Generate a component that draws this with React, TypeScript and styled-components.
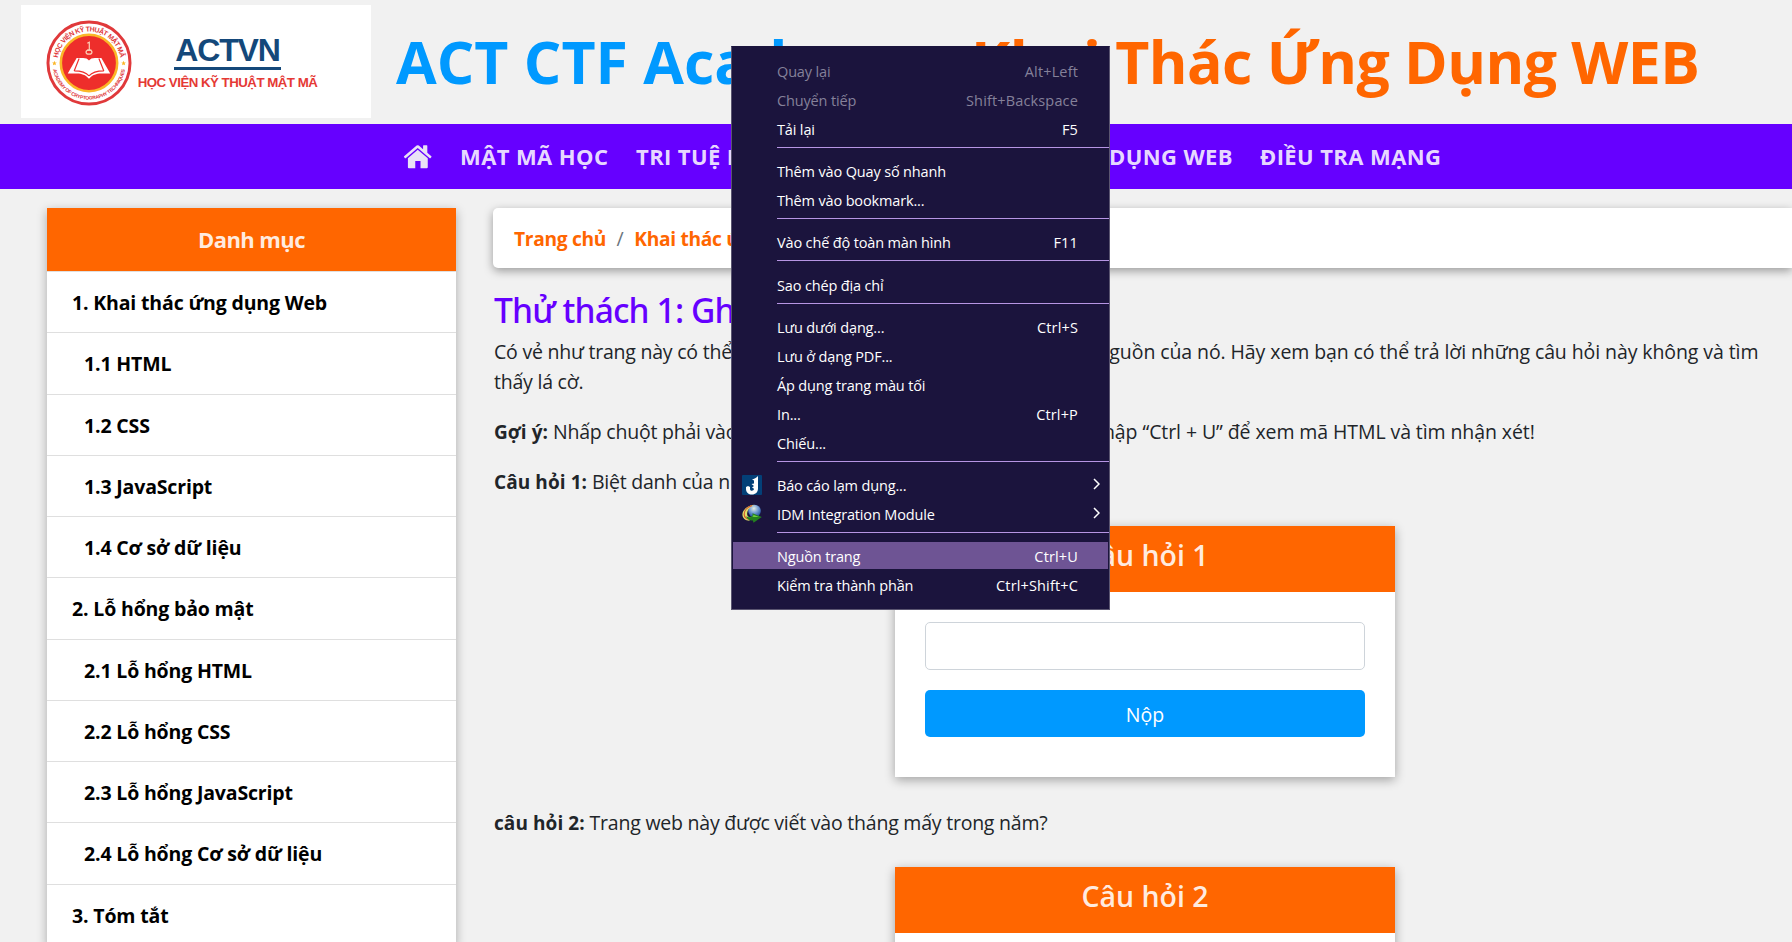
import React from "react";
import styled, { createGlobalStyle } from "styled-components";

const GlobalStyle = createGlobalStyle`
  * { box-sizing: border-box; }
  body {
    margin: 0;
    background: #f1f1f1;
    color: #212529;
    font-family: "Open Sans", "Noto Sans", sans-serif;
    font-size: 19.5px;
    line-height: 30.2px;
    overflow: hidden;
  }
  p, h1, h2, h3, ul { margin: 0; padding: 0; }
`;

const Page = styled.div`
  position: relative;
  width: 1792px;
  height: 942px;
  overflow: hidden;
`;

const Header = styled.header`
  display: flex;
  height: 124px;
  padding: 5px 0 0 21px;
`;

const Logo = styled.div`
  display: flex;
  width: 350px;
  height: 113px;
  padding: 15px 0 0 25px;
  background: #fff;
`;

const LogoText = styled.div`
  display: flex;
  flex-direction: column;
  align-items: center;
  width: 181px;
  margin: 13px 0 0 5px;
  font-family: "Liberation Sans", sans-serif;
  font-weight: 700;
  white-space: nowrap;
`;

const LogoName = styled.div`
  height: 37px;
  padding: 0 1px;
  border-bottom: 3px solid #14487a;
  color: #14487a;
  font-size: 32px;
  line-height: 35px;
  letter-spacing: -1.1px;
`;

const LogoCaption = styled.div`
  margin-top: 5px;
  color: #e53935;
  font-size: 13.3px;
  line-height: 16px;
  letter-spacing: -0.52px;
`;

const Title = styled.h1`
  display: flex;
  margin-left: 25px;
  font-size: 59px;
  line-height: 78px;
  padding-top: 17px;
  font-weight: 700;
  white-space: nowrap;
`;

const TitleBrand = styled.span`
  width: 575px;
  color: #0099ff;
`;

const TitleTopic = styled.span`
  color: #ff6600;
  letter-spacing: -0.55px;
`;

const Nav = styled.nav`
  display: flex;
  align-items: center;
  height: 65px;
  padding-left: 403px;
  background: #6600ff;
  color: rgba(255, 255, 255, 0.87);
  font-size: 22px;
  font-weight: 700;
  letter-spacing: 0.4px;
  white-space: nowrap;
`;

const NavItem = styled.a<{ $width: number; $alignEnd?: boolean }>`
  width: ${(p) => p.$width}px;
  margin-right: 27px;
  text-align: ${(p) => (p.$alignEnd ? "right" : "left")};
`;

const HomeLink = styled.a`
  display: flex;
  width: 57px;
`;

const Main = styled.main`
  display: flex;
  align-items: flex-start;
  padding: 19px 0 0 47px;
`;

const Sidebar = styled.aside`
  width: 409px;
  flex: none;
  background: #fff;
  box-shadow: 0 3px 10px rgba(0, 0, 0, 0.3);
`;

const SidebarHeader = styled.div`
  height: 63px;
  background: #ff6600;
  color: rgba(255, 255, 255, 0.88);
  font-size: 22px;
  font-weight: 700;
  line-height: 62px;
  letter-spacing: -0.6px;
  text-align: center;
`;

const SidebarItem = styled.li<{ $nested?: boolean }>`
  height: 61.25px;
  padding-left: ${(p) => (p.$nested ? 37 : 25)}px;
  border-top: 1px solid #dfdfdf;
  color: #000;
  font-size: 19.5px;
  font-weight: 700;
  line-height: 62.500px;
  letter-spacing: -0.16px;
  list-style: none;
`;

const Content = styled.section`
  flex: 1;
  min-width: 0;
  padding-left: 37px;
  white-space: nowrap;
`;

const Breadcrumb = styled.div`
  display: flex;
  align-items: center;
  height: 60px;
  padding: 2px 0 0 21px;
  border-radius: 5px 0 0 5px;
  background: #fff;
  box-shadow: 0 3px 10px rgba(0, 0, 0, 0.36);
`;

const Crumb = styled.a`
  color: #ff6600;
  font-size: 19.2px;
  font-weight: 700;
  letter-spacing: -0.32px;
`;

const CrumbDivider = styled.span`
  padding: 0 10.5px;
  color: #6c757d;
`;

const Heading = styled.h2`
  margin: 22px 0 0 1px;
  color: #6600ff;
  font-family: "Noto Sans", sans-serif;
  font-size: 33.5px;
  font-weight: 500;
  line-height: 41px;
  letter-spacing: -0.85px;
`;

const Paragraph = styled.p<{ $top: number }>`
  margin: ${(p) => p.$top}px 0 0 1px;
  letter-spacing: -0.225px;
`;

const Strong = styled.strong`
  font-size: 19px;
  font-weight: 700;
  letter-spacing: 0.08px;
`;

const Lead = styled.span<{ $width: number }>`
  display: inline-block;
  width: ${(p) => p.$width}px;
  overflow: hidden;
  vertical-align: top;
`;

const Rest = styled.span`
  letter-spacing: -0.09px;
`;

const Card = styled.div<{ $top: number }>`
  width: 500px;
  height: 251px;
  margin: ${(p) => p.$top}px 0 0 402px;
  background: #fff;
  box-shadow: 0 3px 10px rgba(0, 0, 0, 0.33);
`;

const CardTitle = styled.h3`
  height: 66px;
  background: #ff6600;
  color: rgba(255, 255, 255, 0.88);
  font-size: 28.5px;
  font-weight: 600;
  line-height: 59px;
  text-align: center;
`;

const CardBody = styled.div`
  display: flex;
  flex-direction: column;
  gap: 20px;
  padding: 30px;
`;

const Answer = styled.input`
  height: 48px;
  border: 1px solid #ced4da;
  border-radius: 5px;
  background: #fff;
`;

const Submit = styled.button`
  height: 47px;
  padding: 3px 0 0;
  border: 0;
  border-radius: 5px;
  background: #0099ff;
  color: #fff;
  font: 400 19.5px "Open Sans", sans-serif;
`;

const Menu = styled.div`
  position: absolute;
  left: 731px;
  top: 46px;
  width: 379px;
  height: 563.500px;
  padding: 9px 1px 0;
  border: 1px solid #5a5570;
  border-top-color: #1b143d;
  background: #1b143d;
  color: #fff;
  font-size: 14.5px;
  line-height: 29px;
  letter-spacing: -0.15px;
  white-space: nowrap;
`;

const MenuItem = styled.div<{ $disabled?: boolean; $active?: boolean }>`
  display: grid;
  grid-template-columns: 44px 1fr auto 30px;
  height: 29px;
  align-items: center;
  color: ${(p) => (p.$disabled ? "#85819a" : "#fff")};
  background: ${(p) => (p.$active ? "#6e5494" : "transparent")};
  background-clip: content-box;
  padding: 1px 0;
`;

const MenuIcon = styled.span`
  display: flex;
  padding-left: 9px;
`;

const Shortcut = styled.span`
  letter-spacing: 0.15px;
`;

const Chevron = styled.span`
  display: flex;
  justify-content: flex-end;
  padding: 0 8px 3px 0;
`;

const MenuDivider = styled.div`
  height: 13.2px;
  margin: 0 -1px 0 44px;
  padding-top: 4px;

  &::before {
    content: "";
    display: block;
    height: 1px;
    background: #b795e4;
  }
`;

const Seal = () => (
  <svg width="86" height="86" viewBox="0 0 87 87">
    <defs>
      <path id="arcTop" d="M11.5 43.5a32 32 0 0 1 64 0" />
      <path id="arcBottom" d="M6.5 43.5a37 37 0 0 0 74 0" />
    </defs>
    <circle cx="43.5" cy="43.5" r="41.5" fill="#fff" stroke="#e0393b" strokeWidth="3" />
    <circle cx="43.5" cy="43.5" r="28.5" fill="#ee2e2b" stroke="#fbb728" strokeWidth="2.6" />
    <g fill="#e0393b" fontFamily="Liberation Sans, sans-serif" fontWeight="700" textAnchor="middle">
      <text fontSize="7">
        <textPath href="#arcTop" startOffset="50%" textLength="90">HỌC VIỆN KỸ THUẬT MẬT MÃ</textPath>
      </text>
      <text fontSize="5">
        <textPath href="#arcBottom" startOffset="50%" textLength="103">ACADEMY OF CRYPTOGRAPHY TECHNIQUES</textPath>
      </text>
    </g>
    <path d="m8.500 41.300.7 1.600 1.700.1-1.300 1.100.4 1.700-1.500-.9-1.500.9.4-1.700-1.300-1.100 1.700-.1zM78.500 41.300l.7 1.600 1.700.1-1.300 1.100.4 1.700-1.500-.9-1.500.9.4-1.700-1.300-1.100 1.700-.1z" fill="#fbb728" />
    <path d="M31 38.500h6.500c2.500 0 4.800.8 6 2.500 1.200-1.700 3.500-2.500 6-2.500H56L65 54l-9.500.2c-4.500.1-8.500 1.300-12 5.300-3.500-4-7.500-5.200-12-5.300L22 54z" fill="#fff" />
    <path d="M28.500 51.500 33.500 39M58.500 51.500 53.500 39M43.500 56.500c-3-3.500-8-5-15-5M43.500 56.500c3-3.500 8-5 15-5" fill="none" stroke="#ee2e2b" strokeWidth="1.200" />
    <path d="m41.800 23.500 2-1v8M41.500 30.500h4.500" fill="none" stroke="#fbd3b8" strokeWidth="1.200" />
    <ellipse cx="43.500" cy="32.500" rx="3" ry="2" fill="none" stroke="#fbd3b8" strokeWidth="1.200" />
  </svg>
);

const HomeIcon = () => (
  <svg width="29" height="25" viewBox="0 0 26 22" preserveAspectRatio="none" fill="#e9e2f6">
    <path d="M22.200 12.500v8q0 .9-.9.900h-5.600v-6.400h-4.700v6.400H5.300q-.9 0-.9-.9v-8l8.800-7.400z" />
    <path d="m25.500 11.400-.9 1.100q-.3.200-.6 0L13.200 3.600 2.400 12.500q-.4.200-.6 0l-.9-1.100q-.2-.4.100-.6L12.200 1.400q1-.8 2 0L18 4.600v-3q0-.5.500-.5h2.800q.5 0 .5.500v6.200l3.600 3q.3.200.1.600z" />
  </svg>
);

const AbuseIcon = () => (
  <svg width="20" height="20" viewBox="0 0 20 20">
    <rect width="20" height="20" rx="1" fill="#034078" />
    <path d="M10 4.500C12 4 14.500 2.800 16 1v12.500c0 3.800-2.500 6-6 6s-6-2-6-5.500V12l2-1 2 1v2c0 1 .7 1.800 1.800 1.800S12 15 12 13.800l-2-1.300 2-1.500-2.500-2 2.500-.5V5.500z" fill="#fff" />
  </svg>
);

const IdmIcon = () => (
  <svg width="20" height="20" viewBox="0 0 20 20">
    <defs>
      <radialGradient id="globe" cx="45%" cy="30%" r="65%">
        <stop offset="0" stopColor="#e6efe0" />
        <stop offset=".5" stopColor="#7ba3d6" />
        <stop offset="1" stopColor="#2858a6" />
      </radialGradient>
    </defs>
    <circle cx="12.500" cy="7" r="6.300" fill="url(#globe)" />
    <path d="M12 .8C6 1.500 .4 5.500 .4 10.500c0 3.800 3 6 7 6.300l1-3.300c-2.600-.4-3.600-2-3.200-4.500C5.700 5.500 8 3 12 .8z" fill="#dfe06a" />
    <path d="M10 1.500C5.500 3 2 6.500 2.200 10.500c.2 2.500 2 4.300 5 4.700" fill="none" stroke="#d4552d" strokeWidth="1.200" />
    <path d="M4 12.500c2 .8 4.500.6 6.500-.6V9.200l9.300 3.800-8.300 5.800-.6-2.300C8 17 5.500 15.500 4 12.500z" fill="#23801f" />
    <path d="M5.500 13c2 .5 4 .2 5.700-.6l.1-1.700 5.700 2.300z" fill="#6fd03f" />
  </svg>
);

const ChevronIcon = () => (
  <svg width="7" height="12" viewBox="0 0 7 12" fill="none" stroke="#fff" strokeWidth="1.500">
    <path d="m1 1 5 5-5 5" />
  </svg>
);

type Entry = {
  label: string;
  shortcut?: string;
  disabled?: boolean;
  active?: boolean;
  icon?: React.ReactNode;
};

const menuGroups: Entry[][] = [
  [
    { label: "Quay lại", shortcut: "Alt+Left", disabled: true },
    { label: "Chuyển tiếp", shortcut: "Shift+Backspace", disabled: true },
    { label: "Tải lại", shortcut: "F5" },
  ],
  [{ label: "Thêm vào Quay số nhanh" }, { label: "Thêm vào bookmark..." }],
  [{ label: "Vào chế độ toàn màn hình", shortcut: "F11" }],
  [{ label: "Sao chép địa chỉ" }],
  [
    { label: "Lưu dưới dạng...", shortcut: "Ctrl+S" },
    { label: "Lưu ở dạng PDF..." },
    { label: "Áp dụng trang màu tối" },
    { label: "In...", shortcut: "Ctrl+P" },
    { label: "Chiếu..." },
  ],
  [
    { label: "Báo cáo lạm dụng...", icon: <AbuseIcon /> },
    { label: "IDM Integration Module", icon: <IdmIcon /> },
  ],
  [
    { label: "Nguồn trang", shortcut: "Ctrl+U", active: true },
    { label: "Kiểm tra thành phần", shortcut: "Ctrl+Shift+C" },
  ],
];

const lessons = [
  { label: "1. Khai thác ứng dụng Web" },
  { label: "1.1 HTML", nested: true },
  { label: "1.2 CSS", nested: true },
  { label: "1.3 JavaScript", nested: true },
  { label: "1.4 Cơ sở dữ liệu", nested: true },
  { label: "2. Lỗ hổng bảo mật" },
  { label: "2.1 Lỗ hổng HTML", nested: true },
  { label: "2.2 Lỗ hổng CSS", nested: true },
  { label: "2.3 Lỗ hổng JavaScript", nested: true },
  { label: "2.4 Lỗ hổng Cơ sở dữ liệu", nested: true },
  { label: "3. Tóm tắt" },
];

const QuestionCard = ({ title, top }: { title: string; top: number }) => (
  <Card $top={top}>
    <CardTitle>{title}</CardTitle>
    <CardBody>
      <Answer />
      <Submit>Nộp</Submit>
    </CardBody>
  </Card>
);

const ContextMenu = () => (
  <Menu>
    {menuGroups.map((group, i) => (
      <React.Fragment key={i}>
        {i > 0 && <MenuDivider />}
        {group.map((item) => (
          <MenuItem key={item.label} $disabled={item.disabled} $active={item.active}>
            <MenuIcon>{item.icon}</MenuIcon>
            <span>{item.label}</span>
            <Shortcut>{item.shortcut}</Shortcut>
            <Chevron>{item.icon && <ChevronIcon />}</Chevron>
          </MenuItem>
        ))}
      </React.Fragment>
    ))}
  </Menu>
);

export default function App() {
  return (
    <Page>
      <GlobalStyle />
      <Header>
        <Logo>
          <Seal />
          <LogoText>
            <LogoName>ACTVN</LogoName>
            <LogoCaption>HỌC VIỆN KỸ THUẬT MẬT MÃ</LogoCaption>
          </LogoText>
        </Logo>
        <Title>
          <TitleBrand>ACT CTF Academy</TitleBrand>
          <TitleTopic>Khai Thác Ứng Dụng WEB</TitleTopic>
        </Title>
      </Header>
      <Nav>
        <HomeLink>
          <HomeIcon />
        </HomeLink>
        <NavItem $width={149}>MẬT MÃ HỌC</NavItem>
        <NavItem $width={199}>TRI TUỆ NHÂN TẠO</NavItem>
        <NavItem $width={371} $alignEnd>
          KHAI THÁC ỨNG DỤNG WEB
        </NavItem>
        <NavItem $width={184}>ĐIỀU TRA MẠNG</NavItem>
      </Nav>
      <Main>
        <Sidebar>
          <SidebarHeader>Danh mục</SidebarHeader>
          <ul>
            {lessons.map((l) => (
              <SidebarItem key={l.label} $nested={l.nested}>
                {l.label}
              </SidebarItem>
            ))}
          </ul>
        </Sidebar>
        <Content>
          <Breadcrumb>
            <Crumb>Trang chủ</Crumb>
            <CrumbDivider>/</CrumbDivider>
            <Crumb>Khai thác ứng dụng Web</Crumb>
          </Breadcrumb>
          <Heading>Thử thách 1: Ghi chú</Heading>
          <Paragraph $top={6}>
            <Lead $width={603.5}>Có vẻ như trang này có thể có nhiều bí mật ẩn bên trong mã</Lead>
            <Rest>nguồn của nó. Hãy xem bạn có thể trả lời những câu hỏi này không và tìm</Rest>
            <br />
            thấy lá cờ.
          </Paragraph>
          <Paragraph $top={20}>
            <Lead $width={609}>
              <Strong>Gợi ý:</Strong> Nhấp chuột phải vào trang và chọn Nguồn trang hoặc n
            </Lead>
            <Rest>hập “Ctrl + U” để xem mã HTML và tìm nhận xét!</Rest>
          </Paragraph>
          <Paragraph $top={19.5}>
            <Strong>Câu hỏi 1:</Strong> Biệt danh của nhà phát triển là gì?
          </Paragraph>
          <QuestionCard title="Câu hỏi 1" top={28.5} />
          <Paragraph $top={31.5}>
            <Strong>câu hỏi 2:</Strong> Trang web này được viết vào tháng mấy trong năm?
          </Paragraph>
          <QuestionCard title="Câu hỏi 2" top={28.5} />
        </Content>
      </Main>
      <ContextMenu />
    </Page>
  );
}
